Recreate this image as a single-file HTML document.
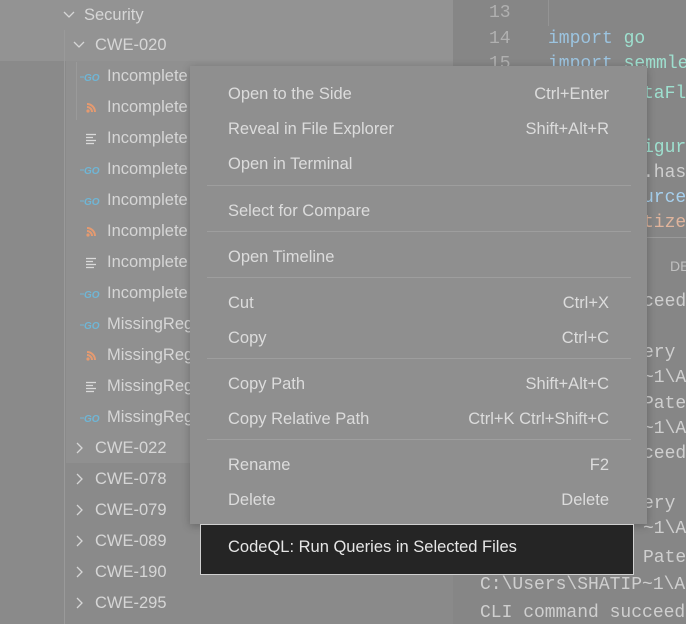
<!DOCTYPE html><html><head><style>
body{margin:0;width:686px;height:624px;overflow:hidden;background:#8a8a8a;position:relative;font-family:"Liberation Sans",sans-serif;}
.a{position:absolute;white-space:nowrap}
.t{font-size:16.5px;color:#d6d6d6;}
.m{font-family:"Liberation Mono",monospace;font-size:18px;color:#cfcfcf}
.ic{position:absolute;left:80px;width:22px;height:14px}
.ln{color:#b0b0b0}
.mi{position:absolute;left:228px;font-size:16.5px;color:#dcdcdc;white-space:nowrap}
.sc{position:absolute;right:77px;font-size:16.5px;color:#dcdcdc;white-space:nowrap}
.sep{position:absolute;left:207px;width:424px;height:1px;background:#9e9e9e}
</style></head><body>
<div class="a" style="left:0;top:0;width:453px;height:61px;background:#939393"></div>
<div class="a" style="left:66px;top:61px;width:387px;height:402px;background:#909090"></div>
<div class="a" style="left:64px;top:30px;width:1px;height:594px;background:#9a9a9a"></div>
<div class="a" style="left:76px;top:62px;width:1px;height:058px;background:#9a9a9a"></div>
<div class="a" style="left:453px;top:0;width:233px;height:624px;background:#868686"></div>
<div class="a" style="left:548px;top:0;width:1px;height:26px;background:#949494"></div>
<div class="a" style="left:453px;top:237px;width:233px;height:1px;background:#9a9a9a"></div>
<svg width="0" height="0" style="position:absolute"><defs>
<symbol id="go" viewBox="0 0 22 14"><path d="M0 7h4" stroke="#6fb6d6" stroke-width="1"/><text x="4" y="11" font-family="Liberation Sans" font-size="10" font-weight="bold" font-style="italic" fill="#6fb6d6">GO</text></symbol>
<symbol id="rss" viewBox="0 0 22 14"><g fill="none" stroke="#e59a70" stroke-width="2"><path d="M7 3a8 8 0 0 1 8 8"/><path d="M7 6a5 5 0 0 1 5 5"/></g><circle cx="8" cy="10" r="1.6" fill="#e59a70"/></symbol>
<symbol id="ls" viewBox="0 0 22 14"><g stroke="#dadada" stroke-width="1.3"><path d="M6 2.5h10M6 5.5h7M6 8.5h10M6 11.5h8"/></g></symbol>
</defs></svg>
<svg class="a" style="left:62px;top:10px" width="14" height="10"><path d="M2 2l5 5 5-5" fill="none" stroke="#d6d6d6" stroke-width="1.3"/></svg>
<div class="a t" style="left:84px;top:6px">Security</div>
<svg class="a" style="left:72px;top:40px" width="14" height="10"><path d="M2 2l5 5 5-5" fill="none" stroke="#d6d6d6" stroke-width="1.3"/></svg>
<div class="a t" style="left:95px;top:36px">CWE-020</div>
<svg class="ic" style="top:70px"><use href="#go"/></svg><div class="a t" style="left:107px;top:67px">Incomplete</div>
<svg class="ic" style="top:101px"><use href="#rss"/></svg><div class="a t" style="left:107px;top:98px">Incomplete</div>
<svg class="ic" style="top:132px"><use href="#ls"/></svg><div class="a t" style="left:107px;top:129px">Incomplete</div>
<svg class="ic" style="top:163px"><use href="#go"/></svg><div class="a t" style="left:107px;top:160px">Incomplete</div>
<svg class="ic" style="top:194px"><use href="#go"/></svg><div class="a t" style="left:107px;top:191px">Incomplete</div>
<svg class="ic" style="top:225px"><use href="#rss"/></svg><div class="a t" style="left:107px;top:222px">Incomplete</div>
<svg class="ic" style="top:256px"><use href="#ls"/></svg><div class="a t" style="left:107px;top:253px">Incomplete</div>
<svg class="ic" style="top:287px"><use href="#go"/></svg><div class="a t" style="left:107px;top:284px">Incomplete</div>
<svg class="ic" style="top:318px"><use href="#go"/></svg><div class="a t" style="left:107px;top:315px">MissingReg</div>
<svg class="ic" style="top:349px"><use href="#rss"/></svg><div class="a t" style="left:107px;top:346px">MissingReg</div>
<svg class="ic" style="top:380px"><use href="#ls"/></svg><div class="a t" style="left:107px;top:377px">MissingReg</div>
<svg class="ic" style="top:411px"><use href="#go"/></svg><div class="a t" style="left:107px;top:408px">MissingReg</div>
<svg width="0" height="0" style="position:absolute"><defs><symbol id="cr" viewBox="0 0 10 14"><path d="M3 2l5 5-5 5" fill="none" stroke="#d6d6d6" stroke-width="1.3"/></symbol></defs></svg>
<svg class="a" style="left:74px;top:441px" width="10" height="14"><use href="#cr"/></svg><div class="a t" style="left:95px;top:439px">CWE-022</div>
<svg class="a" style="left:74px;top:472px" width="10" height="14"><use href="#cr"/></svg><div class="a t" style="left:95px;top:470px">CWE-078</div>
<svg class="a" style="left:74px;top:503px" width="10" height="14"><use href="#cr"/></svg><div class="a t" style="left:95px;top:501px">CWE-079</div>
<svg class="a" style="left:74px;top:534px" width="10" height="14"><use href="#cr"/></svg><div class="a t" style="left:95px;top:532px">CWE-089</div>
<svg class="a" style="left:74px;top:565px" width="10" height="14"><use href="#cr"/></svg><div class="a t" style="left:95px;top:563px">CWE-190</div>
<svg class="a" style="left:74px;top:596px" width="10" height="14"><use href="#cr"/></svg><div class="a t" style="left:95px;top:594px">CWE-295</div>
<div class="a m ln" style="left:489px;top:3px">13</div>
<div class="a m ln" style="left:489px;top:29px">14</div>
<div class="a m" style="left:548px;top:29px"><span style="color:#9cc4e0">import</span> <span style="color:#9ee0cf">go</span></div>
<div class="a m ln" style="left:489px;top:54px">15</div>
<div class="a m" style="left:548px;top:54px"><span style="color:#9cc4e0">import</span> <span style="color:#9ee0cf">semmle</span></div>
<div class="a m" style="left:643px;top:84px;color:#9ee0cf">taFl</div>
<div class="a m" style="left:643px;top:138px;color:#9ee0cf">igur</div>
<div class="a m" style="left:643px;top:163px">.has</div>
<div class="a m" style="left:643px;top:188px;color:#a6d0ee">urce</div>
<div class="a m" style="left:643px;top:213px;color:#e0b49c">tize</div>
<div class="a" style="left:670px;top:258px;font-size:14px;color:#c0c0c0">DE</div>
<div class="a m" style="left:643px;top:292px">ceed</div>
<div class="a m" style="left:643px;top:343px">ery</div>
<div class="a m" style="left:643px;top:368px">~1\A</div>
<div class="a m" style="left:643px;top:394px">Pate</div>
<div class="a m" style="left:643px;top:419px">~1\A</div>
<div class="a m" style="left:643px;top:444px">ceed</div>
<div class="a m" style="left:643px;top:494px">ery</div>
<div class="a m" style="left:643px;top:519px">~1\A</div>
<div class="a m" style="left:643px;top:548px">Pate</div>
<div class="a m" style="left:480px;top:575px">C:\Users\SHATIP~1\A</div>
<div class="a m" style="left:480px;top:603px">CLI command succeed</div>
<div class="a" style="left:190px;top:66px;width:457px;height:458px;background:#8f8f8f;box-shadow:0 2px 8px rgba(0,0,0,.25)"></div>
<div class="mi" style="top:85px">Open to the Side</div><div class="sc" style="top:85px">Ctrl+Enter</div>
<div class="mi" style="top:120px">Reveal in File Explorer</div><div class="sc" style="top:120px">Shift+Alt+R</div>
<div class="mi" style="top:155px">Open in Terminal</div>
<div class="sep" style="top:185px"></div>
<div class="mi" style="top:202px">Select for Compare</div>
<div class="sep" style="top:231px"></div>
<div class="mi" style="top:248px">Open Timeline</div>
<div class="sep" style="top:277px"></div>
<div class="mi" style="top:294px">Cut</div><div class="sc" style="top:294px">Ctrl+X</div>
<div class="mi" style="top:329px">Copy</div><div class="sc" style="top:329px">Ctrl+C</div>
<div class="sep" style="top:358px"></div>
<div class="mi" style="top:375px">Copy Path</div><div class="sc" style="top:375px">Shift+Alt+C</div>
<div class="mi" style="top:410px">Copy Relative Path</div><div class="sc" style="top:410px">Ctrl+K Ctrl+Shift+C</div>
<div class="sep" style="top:439px"></div>
<div class="mi" style="top:456px">Rename</div><div class="sc" style="top:456px">F2</div>
<div class="mi" style="top:491px">Delete</div><div class="sc" style="top:491px">Delete</div>
<div class="a" style="left:200px;top:524px;width:432px;height:49px;background:#252525;border:1px solid #d0d0d0"></div>
<div class="mi" style="top:538px;color:#e6e6e6">CodeQL: Run Queries in Selected Files</div>
</body></html>
